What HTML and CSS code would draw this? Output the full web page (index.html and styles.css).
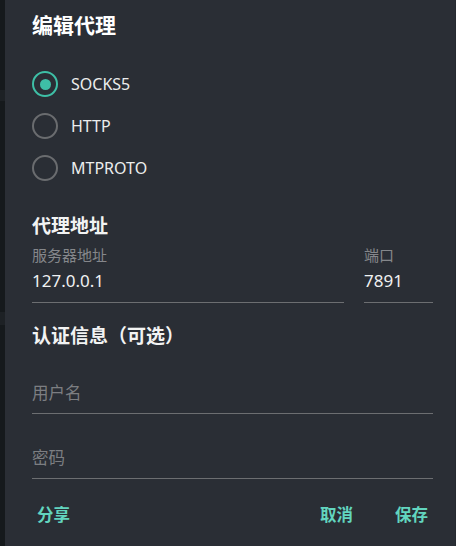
FILE: index.html
```html
<!DOCTYPE html>
<html lang="zh-CN">
<head>
<meta charset="utf-8">
<title>编辑代理</title>
<link rel="stylesheet" href="styles.css">
</head>
<body>
<div class="backdrop">
  <div class="band band-a"></div>
  <div class="band band-b"></div>
</div>
<div class="dialog">
  <h1 class="title">编辑代理</h1>
  <div class="radios">
    <label class="radio-row"><span class="radio checked"></span><span class="radio-text">SOCKS5</span></label>
    <label class="radio-row"><span class="radio"></span><span class="radio-text">HTTP</span></label>
    <label class="radio-row"><span class="radio"></span><span class="radio-text">MTPROTO</span></label>
  </div>
  <h2 class="section">代理地址</h2>
  <div class="addr-row">
    <div class="field grow">
      <div class="label">服务器地址</div>
      <div class="value">127.0.0.1</div>
    </div>
    <div class="field port">
      <div class="label">端口</div>
      <div class="value">7891</div>
    </div>
  </div>
  <h2 class="section auth">认证信息（可选）</h2>
  <div class="field solo"><div class="placeholder">用户名</div></div>
  <div class="field solo"><div class="placeholder">密码</div></div>
  <div class="actions">
    <button class="btn">分享</button>
    <div class="spacer"></div>
    <button class="btn">取消</button>
    <button class="btn">保存</button>
  </div>
</div>
</body>
</html>
```
FILE: styles.css
```css
html, body {
  margin: 0;
  padding: 0;
  height: 546px;
  overflow: hidden;
}
body {
  display: flex;
  background: #2a2e35;
  font-family: "Noto Sans", "Noto Sans CJK SC", sans-serif;
  color: #e8e9ea;
}
.backdrop {
  width: 5px;
  flex: none;
  background: #15191c;
  display: flex;
  flex-direction: column;
}
.band { height: 11px; background: #1d2125; }
.band-a { margin-top: 90px; }
.band-b { margin-top: 211px; height: 13px; }
.dialog {
  flex: 1;
  background: #2a2e35;
  padding: 9px 22px 0 27px;
  display: flex;
  flex-direction: column;
  border-right: 1px solid #262a30;
}
.title {
  margin: 0;
  font-size: 21px;
  line-height: 32px;
  font-weight: 700;
  color: #ffffff;
}
.radios {
  margin-top: 22px;
  display: flex;
  flex-direction: column;
}
.radio-row {
  height: 42px;
  display: flex;
  align-items: center;
}
.radio {
  box-sizing: border-box;
  width: 26px;
  height: 26px;
  border-radius: 50%;
  border: 2.5px solid #6a6c6f;
  margin-right: 13px;
  display: flex;
  align-items: center;
  justify-content: center;
}
.radio.checked { border-color: #3ebfa6; }
.radio.checked::after {
  content: "";
  width: 11px;
  height: 11px;
  border-radius: 50%;
  background: #3ebfa6;
}
.radio-text {
  font-size: 16px;
  color: #eceded;
}
.section {
  margin: 24px 0 0;
  font-size: 19px;
  line-height: 26px;
  font-weight: 700;
  color: #f2f3f3;
}
.addr-row {
  display: flex;
  gap: 20px;
  margin-top: 6px;
}
.field {
  display: flex;
  flex-direction: column;
  border-bottom: 1px solid #6c6e71;
  padding-bottom: 9px;
}
.grow { flex: 1; }
.port { width: 69px; }
.label {
  font-size: 15px;
  line-height: 20px;
  color: #85878b;
}
.value {
  margin-top: 4px;
  font-size: 17px;
  line-height: 24px;
  color: #f0f1f1;
}
.auth { margin-top: 20px; }
.solo {
  margin-top: 32px;
  padding-bottom: 8px;
}
.placeholder {
  font-size: 16.5px;
  line-height: 24px;
  color: #7c7e82;
}
.actions {
  display: flex;
  align-items: center;
  margin-top: 18px;
  height: 36px;
}
.spacer { flex: 1; }
.btn {
  background: none;
  border: none;
  padding: 0;
  font-family: inherit;
  font-size: 16.5px;
  font-weight: 700;
  color: #62d5bf;
  line-height: 36px;
}
.btn:first-child { margin-left: 5px; }
.btn + .btn { margin-left: 42px; margin-right: 5px; }
```
